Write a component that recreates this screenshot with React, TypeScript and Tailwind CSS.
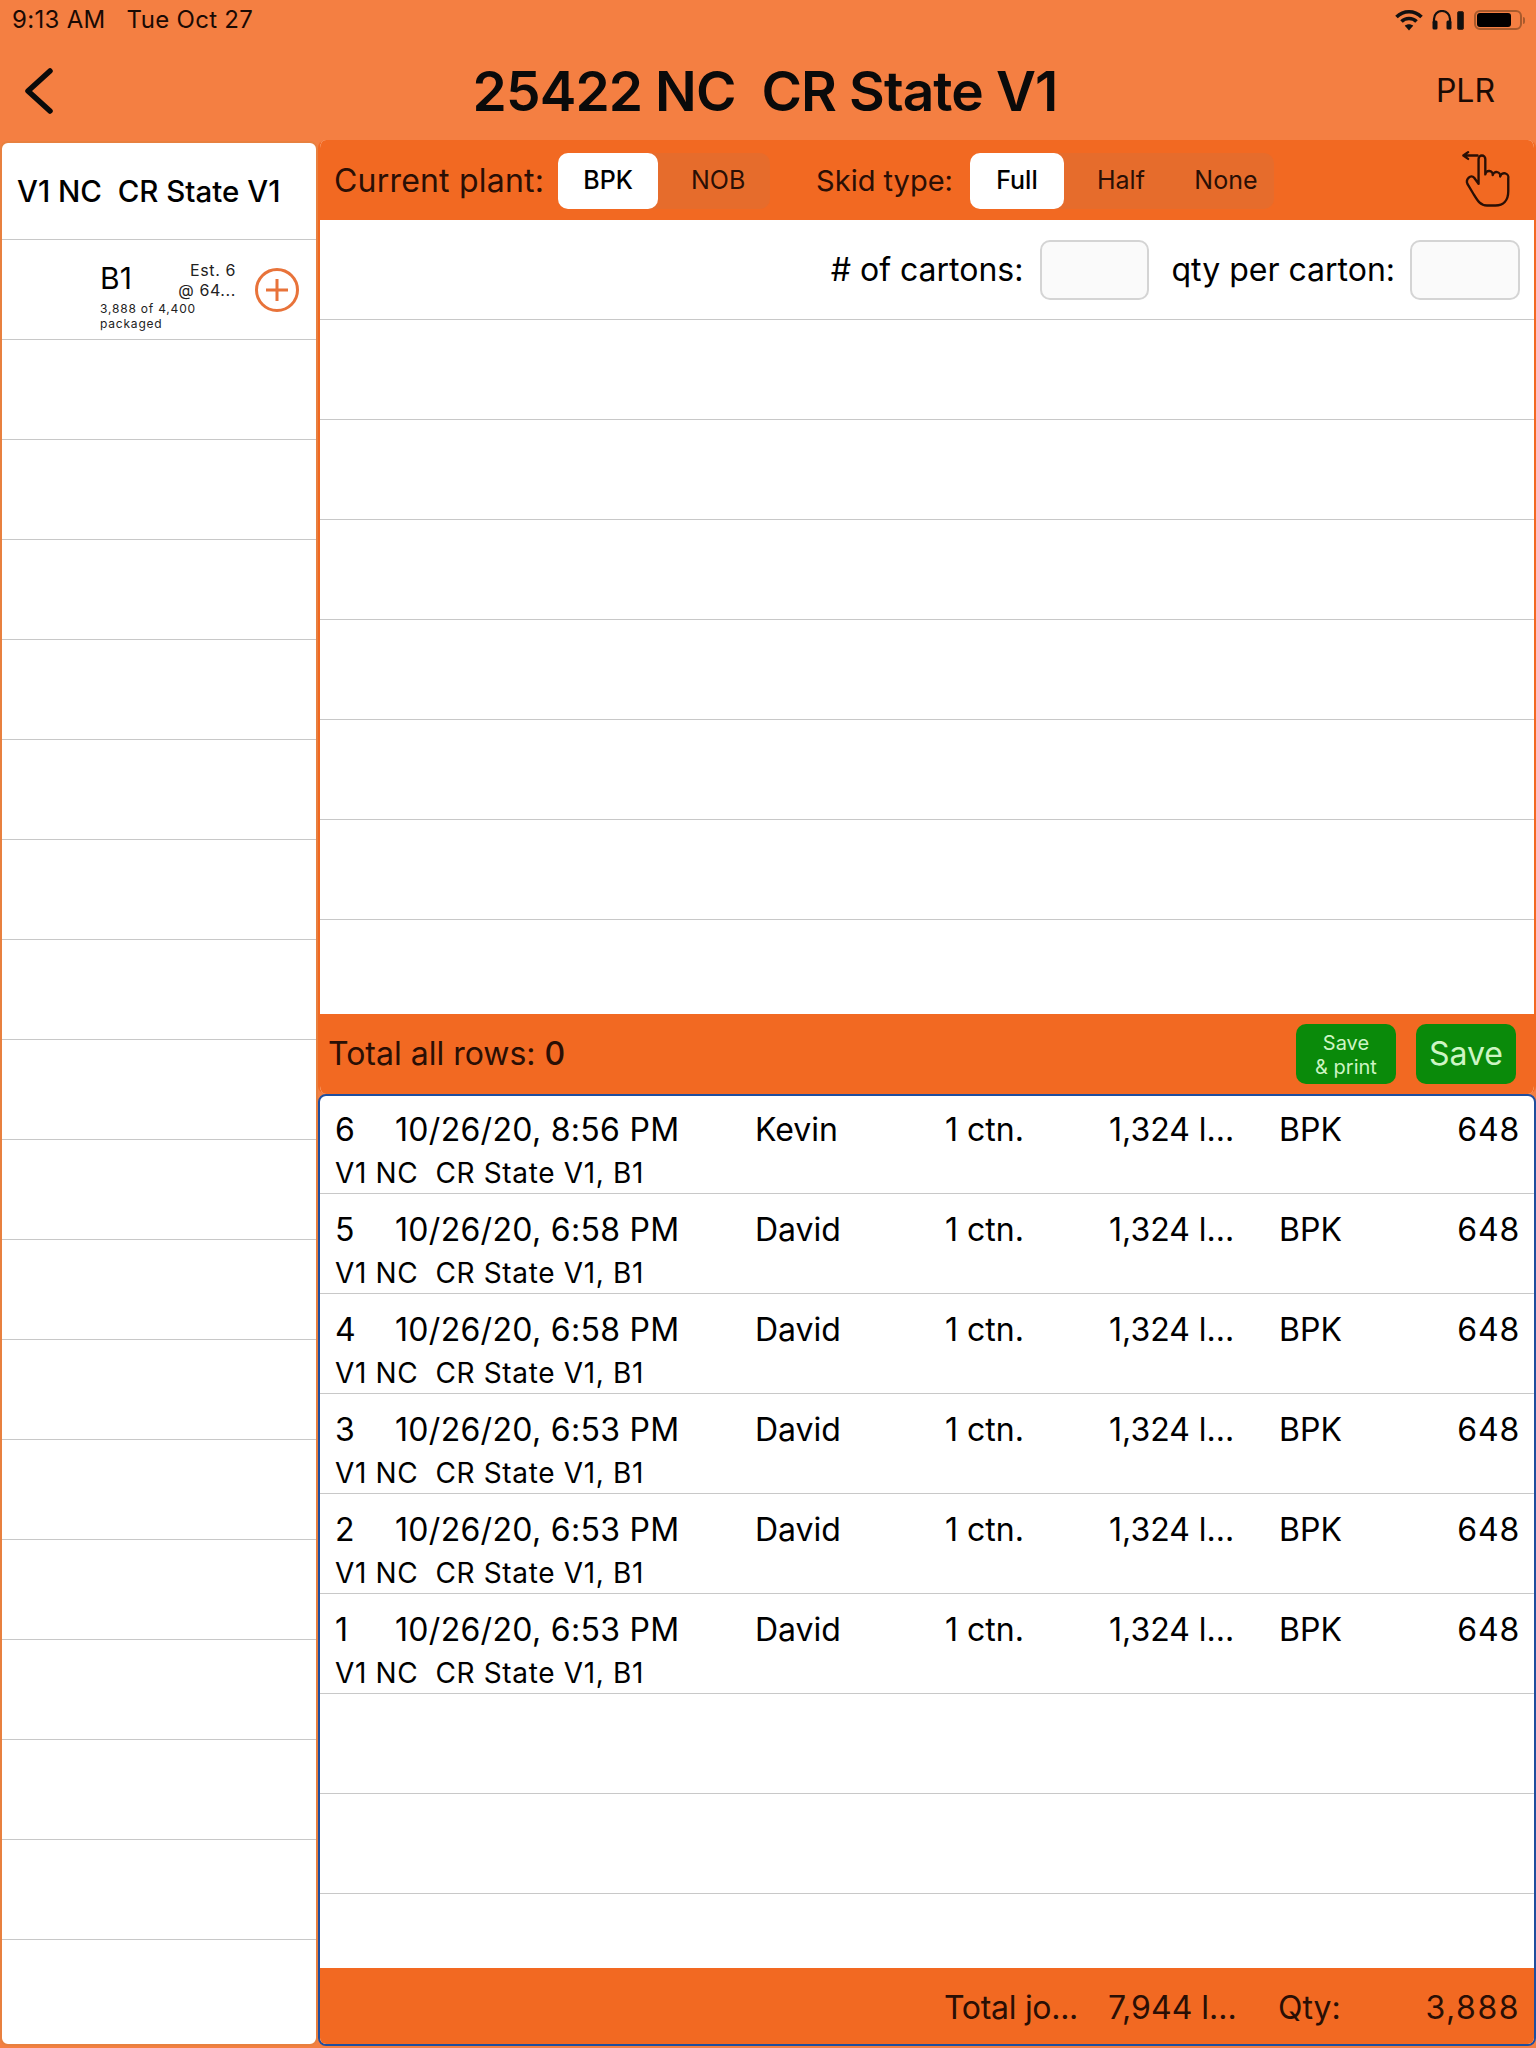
const packages = [
  { id: 6, date: "10/26/20, 8:56 PM", user: "Kevin" },
  { id: 5, date: "10/26/20, 6:58 PM", user: "David" },
  { id: 4, date: "10/26/20, 6:58 PM", user: "David" },
  { id: 3, date: "10/26/20, 6:53 PM", user: "David" },
  { id: 2, date: "10/26/20, 6:53 PM", user: "David" },
  { id: 1, date: "10/26/20, 6:53 PM", user: "David" },
];

function StatusIcons() {
  return (
    <div className="flex items-center">
      <svg width="28" height="22" viewBox="0 0 28 22" fill="none" stroke="#111" strokeWidth="3.6">
        <path d="M1.5 8 C8.5 1 19.5 1 26.5 8" />
        <path d="M6.5 12.5 C10.5 8.5 17.5 8.5 21.5 12.5" />
        <path d="M14 21.5 L9.8 16.8 C12 14.8 16 14.8 18.2 16.8 Z" fill="#111" stroke="none" />
      </svg>
      <svg className="ml-[9px]" width="20" height="20" viewBox="0 0 20 20" fill="none" stroke="#111" strokeWidth="2.2">
        <path d="M2 13 V9 a8 8 0 0 1 16 0 V13" />
        <rect x="0.5" y="10.5" width="5" height="9" rx="1.5" fill="#111" stroke="none" />
        <rect x="14.5" y="10.5" width="5" height="9" rx="1.5" fill="#111" stroke="none" />
      </svg>
      <div className="ml-[5px] flex h-[19px] w-[7px] items-end rounded-[2px] border border-[#4a2410] bg-[#111]" />
      <div className="ml-[10px] flex h-[20px] w-[48px] items-center rounded-[6px] border-2 border-[#a85a2c] p-[1px]">
        <div className="h-[14px] w-[34px] rounded-[3px] bg-black" />
      </div>
      <div className="ml-[1px] h-[7px] w-[2px] rounded-r-sm bg-[#a85a2c]" />
    </div>
  );
}

function HandIcon() {
  return (
    <svg width="54" height="63" viewBox="90 50 160 186" fill="none" stroke="#2a0f05" strokeWidth="7" strokeLinecap="round" strokeLinejoin="round">
      <path d="M100 66 H142 M100 66 L114 56 M100 66 L114 76" />
      <path d="M145 150 V76 a10 10 0 0 1 20 0 V122 a11 11 0 0 1 22 2 a11 11 0 0 1 22 4 a12 12 0 0 1 24 6 V172 C233 200 218 214 195 214 H170 C150 214 142 200 130 180 L112 150 C106 136 122 120 132 132 L145 150" />
    </svg>
  );
}

function Segmented({ options }: { options: { label: string; width: string }[] }) {
  return (
    <div className="flex h-[56px] rounded-[10px] bg-[#e66c2c]">
      {options.map((o, i) => (
        <div
          key={o.label}
          className={
            i === 0
              ? `flex items-center justify-center rounded-[10px] bg-white text-[25px] font-medium text-black ${o.width}`
              : `flex items-center justify-center pl-[8px] text-[25px] text-[#2a0f05] ${o.width}`
          }
        >
          {o.label}
        </div>
      ))}
    </div>
  );
}

function PackageRow({ id, date, user }: { id: number; date: string; user: string }) {
  return (
    <div className="h-[100px] border-b border-[#c8c8c8] pl-[15px] pr-[14px] pt-[15px] text-black first:h-[98px] first:pt-[13px]">
      <div className="flex h-[42px] items-center text-[32px]">
        <div className="w-[60px]">{id}</div>
        <div className="w-[360px] tracking-[0.3px]">{date}</div>
        <div className="w-[190px]">{user}</div>
        <div className="w-[164px]">1 ctn.</div>
        <div className="w-[170px] whitespace-nowrap">1,324 l...</div>
        <div className="w-[100px]">BPK</div>
        <div className="flex-1 text-right tracking-[0.8px]">648</div>
      </div>
      <div className="mt-[4px] whitespace-pre text-[28px] leading-[36px] tracking-[0.65px]">V1 NC  CR State V1, B1</div>
    </div>
  );
}

export default function App() {
  return (
    <div className="flex h-[2048px] w-[1536px] flex-col overflow-hidden bg-[#f47f42] font-['Inter','Liberation_Sans',sans-serif] text-black">
      <div className="flex h-[40px] items-center justify-between pl-[12px] pr-[11px]">
        <div className="whitespace-pre text-[24px] tracking-[0.3px] text-[#1a0a04]">9:13 AM   Tue Oct 27</div>
        <StatusIcons />
      </div>

      <div className="flex h-[100px] items-center justify-between pl-[24px] pr-[41px] pt-[2px]">
        <div className="w-[120px]">
          <svg width="30" height="46" viewBox="0 0 30 46" fill="none" stroke="#0a0a0a" strokeWidth="5.5" strokeLinecap="round" strokeLinejoin="round">
            <path d="M26 3 L4 23 L26 43" />
          </svg>
        </div>
        <div className="whitespace-pre text-[55px] font-semibold tracking-[-0.9px] text-[#0a0a0a]">25422 NC  CR State V1</div>
        <div className="w-[109px] text-right text-[32px] text-[#1a0a04]">PLR</div>
      </div>

      <div className="flex min-h-0 flex-1 pb-[2px]">
        <div className="mt-[1px] w-[318px] overflow-hidden rounded-lg border-2 border-[#e8803f] bg-white">
          <div className="flex h-[97px] items-center whitespace-pre border-b border-[#c8c8c8] pl-[15px] text-[29.5px] font-medium">
            V1 NC  CR State V1
          </div>
          <div className="flex h-[100px] border-b border-[#c8c8c8] pl-[98px]">
            <div className="w-[74px] pt-[22px]">
              <div className="text-[30px] leading-[32px]">B1</div>
              <div className="w-[100px] pt-[7px] text-[12px] leading-[15px] tracking-[0.8px] text-[#222]">3,888 of 4,400 packaged</div>
            </div>
            <div className="w-[62px] pt-[20px] text-right text-[16px] leading-[20px] tracking-[0.6px] text-[#222]">
              <div>Est. 6</div>
              <div className="whitespace-nowrap">@ 64...</div>
            </div>
            <div className="ml-[19px] mt-[28px] flex h-[44px] w-[44px] items-center justify-center rounded-full border-[3px] border-[#e8733a]">
              <svg width="24" height="24" viewBox="0 0 24 24" stroke="#e8733a" strokeWidth="3">
                <path d="M12 1 V23 M1 12 H23" />
              </svg>
            </div>
          </div>
          {Array.from({ length: 16 }, (_, i) => (
            <div key={i} className="h-[100px] border-b border-[#c8c8c8]" />
          ))}
        </div>

        <div className="flex min-w-0 flex-1 flex-col">
          <div className="h-[954px] overflow-hidden rounded-lg border-x-2 border-[#f26922] bg-white">
            <div className="flex h-[80px] items-center bg-[#f26922] pl-[14px] pr-[20px] pt-[2px]">
              <div className="mr-[14px] text-[32px] tracking-[0.2px] text-[#2a0f05]">Current plant:</div>
              <Segmented
                options={[
                  { label: "BPK", width: "w-[100px]" },
                  { label: "NOB", width: "w-[112px]" },
                ]}
              />
              <div className="ml-[46px] mr-[17px] text-[29px] text-[#2a0f05]">Skid type:</div>
              <Segmented
                options={[
                  { label: "Full", width: "w-[94px]" },
                  { label: "Half", width: "w-[106px]" },
                  { label: "None", width: "w-[104px]" },
                ]}
              />
              <div className="ml-auto">
                <HandIcon />
              </div>
            </div>
            <div className="flex h-[100px] items-center justify-end border-b border-[#c8c8c8] pr-[14px] pt-[1px]">
              <div className="text-[32px]"># of cartons:</div>
              <div className="ml-[17px] h-[60px] w-[109px] rounded-[10px] border-2 border-[#d4d4d4] bg-[#fafafa]" />
              <div className="ml-[22px] text-[32px]">qty per carton:</div>
              <div className="ml-[15px] h-[60px] w-[110px] rounded-[10px] border-2 border-[#d4d4d4] bg-[#fafafa]" />
            </div>
            {Array.from({ length: 6 }, (_, i) => (
              <div key={i} className="h-[100px] border-b border-[#c8c8c8]" />
            ))}
            <div className="h-[94px]" />
            <div className="flex h-[80px] items-center justify-between bg-[#f26922] pl-[8px] pr-[18px]">
              <div className="text-[32px] text-[#2a0f05]">
                Total all rows: <span className="font-medium">0</span>
              </div>
              <div className="flex gap-[20px]">
                <div className="flex h-[60px] w-[100px] items-center justify-center rounded-[10px] bg-[#0a8a0a] pt-[1px] text-center text-[20px] leading-[24px] text-[#cdf5c4]">
                  Save
                  <br />
                  &amp; print
                </div>
                <div className="flex h-[60px] w-[100px] items-center justify-center rounded-[10px] bg-[#0a8a0a] text-[32px] text-[#cdf5c4]">
                  Save
                </div>
              </div>
            </div>
          </div>

          <div className="flex min-h-0 flex-1 flex-col overflow-hidden rounded-lg border-2 border-[#1f4e9e] bg-white">
            {packages.map((p) => (
              <PackageRow key={p.id} id={p.id} date={p.date} user={p.user} />
            ))}
            {Array.from({ length: 2 }, (_, i) => (
              <div key={i} className="h-[100px] border-b border-[#c8c8c8]" />
            ))}
            <div className="flex-1" />
            <div className="flex h-[76px] items-center bg-[#f26922] pr-[14px] pt-[3px] text-[32px] text-[#2a0f05]">
              <div className="ml-[624px] w-[164px] whitespace-nowrap tracking-[-0.3px]">Total jo...</div>
              <div className="w-[170px] whitespace-nowrap">7,944 l...</div>
              <div className="w-[100px]">Qty:</div>
              <div className="flex-1 text-right tracking-[1.5px]">3,888</div>
            </div>
          </div>
        </div>
      </div>
    </div>
  );
}
